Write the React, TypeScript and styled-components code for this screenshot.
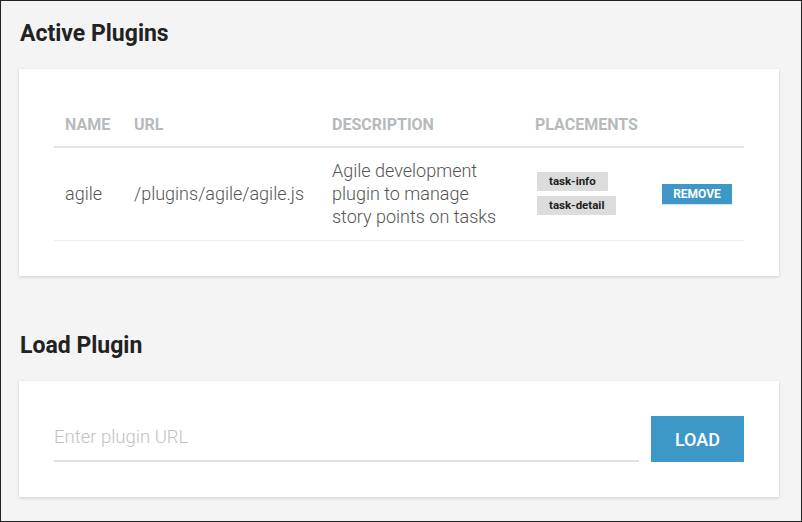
import React from "react";
import styled, { createGlobalStyle } from "styled-components";

const Global = createGlobalStyle`
  html, body { margin: 0; padding: 0; background: #f4f4f4; }
  * { box-sizing: border-box; }
  body {
    font-family: Roboto, "Noto Sans", Arial, sans-serif;
    -webkit-font-smoothing: antialiased;
  }
`;

const Frame = styled.div`
  width: 802px;
  height: 522px;
  border: 1px solid #222;
  background: #f4f4f4;
  padding: 19px 22px 0 18px;
  overflow: hidden;
`;

const Heading = styled.h2<{ $gap: number }>`
  margin: ${(p) => p.$gap}px 0 0 1px;
  font-size: 23px;
  line-height: 27px;
  font-weight: 700;
  color: #222;
`;

const Card = styled.div<{ $gap: number }>`
  margin-top: ${(p) => p.$gap}px;
  background: #fff;
  box-shadow: 0 1px 3px rgba(0, 0, 0, 0.16);
  padding: 35px;
`;

const COLS = "69px 198px 203px 127px 1fr";

const HeadRow = styled.div`
  display: grid;
  grid-template-columns: ${COLS};
  height: 44px;
  align-items: center;
  padding-bottom: 2px;
  border-bottom: 2px solid #e6e6e6;
`;

const HeadCell = styled.div`
  padding: 0 11px;
  font-size: 16px;
  font-weight: 700;
  color: #b6babd;
  text-transform: uppercase;
`;

const Row = styled.div`
  display: grid;
  grid-template-columns: ${COLS};
  align-items: center;
  padding: 11px 0 12px;
  border-bottom: 1px solid #ececec;
`;

const Cell = styled.div<{ $padRight?: number }>`
  padding: 0 ${(p) => p.$padRight ?? 11}px 0 11px;
  font-size: 18px;
  font-weight: 300;
  line-height: 23px;
  color: #555;
`;

const Tags = styled.div`
  display: flex;
  flex-direction: column;
  align-items: flex-start;
  gap: 5px;
  padding-left: 13px;
`;

const Tag = styled.span`
  display: inline-block;
  background: #dcdcdc;
  color: #222;
  font-size: 11.5px;
  font-weight: 700;
  line-height: 19px;
  height: 19px;
  padding: 0 12px;
`;

const Actions = styled.div`
  padding: 0 11px;
  display: flex;
  align-items: center;
`;

const SmallButton = styled.button`
  width: 70px;
  height: 20px;
  border: none;
  background: #3d98c8;
  color: #fff;
  font-family: Roboto, Arial, sans-serif;
  font-size: 12px;
  font-weight: 700;
  padding: 0;
  box-shadow: 0 1px 1px rgba(0, 0, 0, 0.12);
`;

const Form = styled.div`
  display: flex;
  align-items: stretch;
  gap: 12px;
`;

const UrlInput = styled.input`
  flex: 1;
  height: 46px;
  border: none;
  border-bottom: 2px solid #e0e0e0;
  outline: none;
  padding: 0 0 2px;
  font-family: Roboto, Arial, sans-serif;
  font-size: 18.5px;
  font-weight: 300;
  color: #555;
  background: transparent;
  &::placeholder { color: #c2c2c2; }
`;

const LoadButton = styled.button`
  width: 93px;
  height: 46px;
  border: none;
  background: #3d98c8;
  color: #fff;
  font-family: Roboto, Arial, sans-serif;
  font-size: 18px;
  font-weight: 500;
  padding: 0;
`;

export default function App() {
  return (
    <>
      <Global />
      <Frame>
        <Heading $gap={0}>Active Plugins</Heading>
        <Card $gap={22}>
          <HeadRow>
            <HeadCell>Name</HeadCell>
            <HeadCell>URL</HeadCell>
            <HeadCell>Description</HeadCell>
            <HeadCell>Placements</HeadCell>
            <HeadCell />
          </HeadRow>
          <Row>
            <Cell>agile</Cell>
            <Cell>/plugins/agile/agile.js</Cell>
            <Cell $padRight={20}>Agile development plugin to manage story points on tasks</Cell>
            <Tags>
              <Tag>task-info</Tag>
              <Tag>task-detail</Tag>
            </Tags>
            <Actions>
              <SmallButton>REMOVE</SmallButton>
            </Actions>
          </Row>
        </Card>
        <Heading $gap={56}>Load Plugin</Heading>
        <Card $gap={22}>
          <Form>
            <UrlInput placeholder="Enter plugin URL" />
            <LoadButton>LOAD</LoadButton>
          </Form>
        </Card>
      </Frame>
    </>
  );
}
